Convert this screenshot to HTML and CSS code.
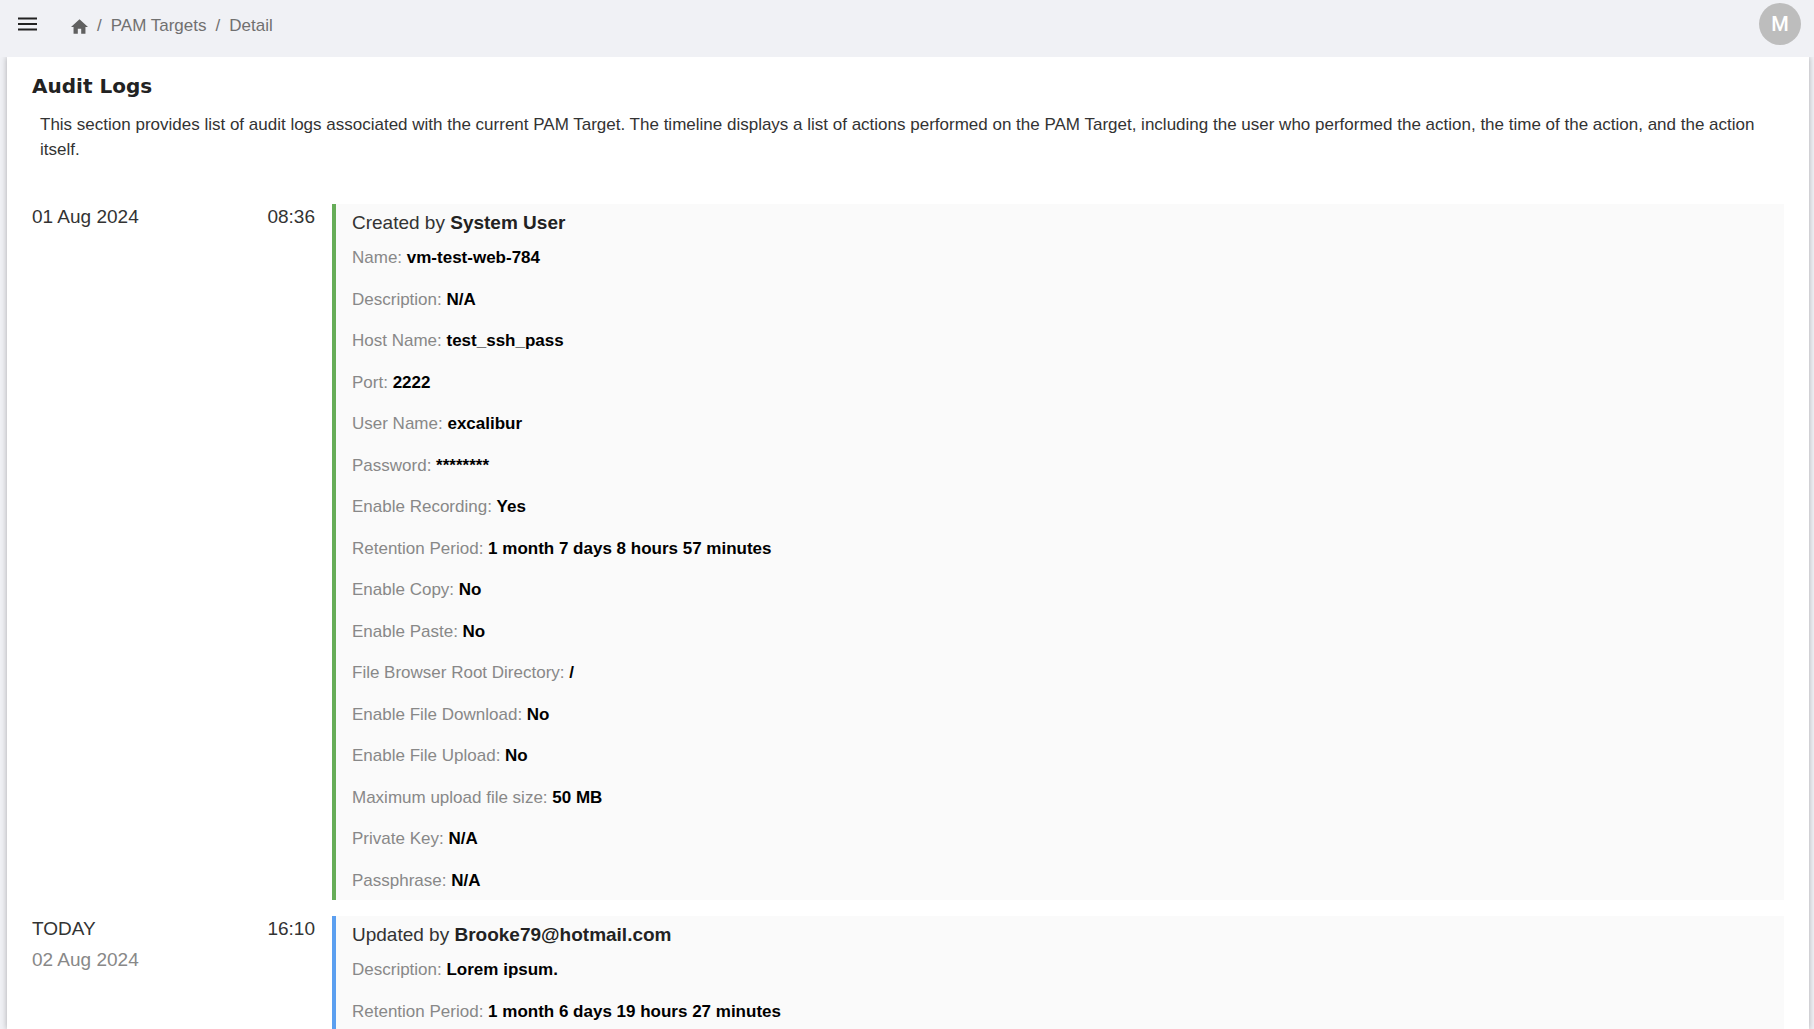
FILE: index.html
```html
<!DOCTYPE html>
<html lang="en">
<head>
<meta charset="utf-8">
<meta name="viewport" content="width=device-width, initial-scale=1">
<title>PAM Targets - Detail</title>
<link rel="stylesheet" href="styles.css">
</head>
<body>
<header class="topbar">
  <button class="menu-button" type="button" aria-label="Open menu">
    <svg class="menu-icon" viewBox="0 0 19 14" aria-hidden="true"><path d="M0 0.500h19v2H0zM0 6h19v2H0zM0 11.500h19v2H0z"/></svg>
  </button>
  <nav class="breadcrumbs" aria-label="Breadcrumb">
    <a class="crumb crumb-home" href="#" aria-label="Home">
      <svg class="home-icon" viewBox="2 3 20 17" aria-hidden="true"><path d="M10 20v-6h4v6h5v-8h3L12 3 2 12h3v8z"/></svg>
    </a>
    <span class="separator">/</span>
    <a class="crumb" href="#">PAM Targets</a>
    <span class="separator">/</span>
    <span class="crumb">Detail</span>
  </nav>
  <button class="avatar" type="button">M</button>
</header>
<main class="card">
  <h1 class="title">Audit Logs</h1>
  <p class="intro">This section provides list of audit logs associated with the current PAM Target. The timeline displays a list of actions performed on the PAM Target, including the user who performed the action, the time of the action, and the action itself.</p>
  <section class="timeline">
    <article class="entry">
      <div class="stamp">
        <div class="date">01 Aug 2024</div>
        <time class="time">08:36</time>
      </div>
      <div class="event event-created">
        <h2 class="event-title">Created by <strong>System User</strong></h2>
        <ul class="changes">
          <li>Name: <b>vm-test-web-784</b></li>
          <li>Description: <b>N/A</b></li>
          <li>Host Name: <b>test_ssh_pass</b></li>
          <li>Port: <b>2222</b></li>
          <li>User Name: <b>excalibur</b></li>
          <li>Password: <b>********</b></li>
          <li>Enable Recording: <b>Yes</b></li>
          <li>Retention Period: <b>1 month 7 days 8 hours 57 minutes</b></li>
          <li>Enable Copy: <b>No</b></li>
          <li>Enable Paste: <b>No</b></li>
          <li>File Browser Root Directory: <b>/</b></li>
          <li>Enable File Download: <b>No</b></li>
          <li>Enable File Upload: <b>No</b></li>
          <li>Maximum upload file size: <b>50 MB</b></li>
          <li>Private Key: <b>N/A</b></li>
          <li>Passphrase: <b>N/A</b></li>
        </ul>
      </div>
    </article>
    <article class="entry">
      <div class="stamp">
        <div class="date">TODAY<div class="date-sub">02 Aug 2024</div></div>
        <time class="time">16:10</time>
      </div>
      <div class="event event-updated">
        <h2 class="event-title">Updated by <strong>Brooke79@hotmail.com</strong></h2>
        <ul class="changes">
          <li>Description: <b>Lorem ipsum.</b></li>
          <li>Retention Period: <b>1 month 6 days 19 hours 27 minutes</b></li>
        </ul>
      </div>
    </article>
  </section>
</main>
</body>
</html>
```
FILE: styles.css
```css
* {
  box-sizing: border-box;
}

body {
  display: flex;
  flex-direction: column;
  height: 100vh;
  margin: 0;
  overflow: hidden;
  background: #f0f1f5;
  color: #333;
  font-family: "Liberation Sans", Arial, sans-serif;
  font-size: 17px;
}

.topbar {
  display: flex;
  flex: none;
  align-items: flex-start;
  height: 57px;
  padding: 3px 13px 0 18px;
  background: #f0f1f5;
  position: relative;
  z-index: 1;
}

.menu-button {
  display: flex;
  margin: 14px 34px 0 0;
  padding: 0;
  border: 0;
  background: none;
}

.menu-icon {
  width: 19px;
  height: 14px;
  fill: #222;
}

.breadcrumbs {
  display: flex;
  flex: 1;
  align-items: center;
  gap: 9px;
  height: 46px;
  color: #707070;
  font-size: 17px;
}

.crumb {
  color: inherit;
  text-decoration: none;
}

.crumb-home {
  display: flex;
}

.home-icon {
  width: 17px;
  height: 15px;
  fill: #606060;
}

.avatar {
  width: 42px;
  height: 42px;
  padding: 0;
  border: 0;
  border-radius: 50%;
  background: #bdbdbd;
  color: #fff;
  font: 500 20px/42px Roboto, sans-serif;
}

.card {
  flex: 1;
  margin: 0 5px 0 7px;
  padding: 16px 25px 0;
  min-height: 0;
  background: #fff;
  box-shadow: 0 0 6px rgba(0, 0, 0, 0.3);
}

.title {
  margin: 0 0 13px;
  color: #222;
  font: 900 20px/26px "DejaVu Sans", sans-serif;
}

.intro {
  margin: 0 0 42px;
  padding: 0 8px;
  font-size: 17px;
  line-height: 25px;
}

.timeline {
  display: flex;
  flex-direction: column;
  gap: 16px;
}

.entry {
  display: flex;
}

.stamp {
  display: flex;
  justify-content: space-between;
  width: 300px;
  padding-right: 17px;
  font-size: 19px;
  line-height: 25px;
}

.date-sub {
  margin-top: 6px;
  color: #888;
}

.event {
  flex: 1;
  padding: 6px 16px 0;
  border-left: 4px solid;
  background: #fafafa;
}

.event-created {
  border-color: #66ad58;
}

.event-updated {
  border-color: #5b9ff0;
}

.event-title {
  margin: 0;
  color: #333;
  font-size: 19px;
  font-weight: 400;
  line-height: 26px;
}

.event-title strong {
  color: #222;
}

.changes {
  display: grid;
  grid-auto-rows: 42px 41px;
  margin: 0;
  padding: 0;
  color: #888;
  font-size: 17px;
  line-height: 43px;
  list-style: none;
}

.changes b {
  color: #000;
}
```
